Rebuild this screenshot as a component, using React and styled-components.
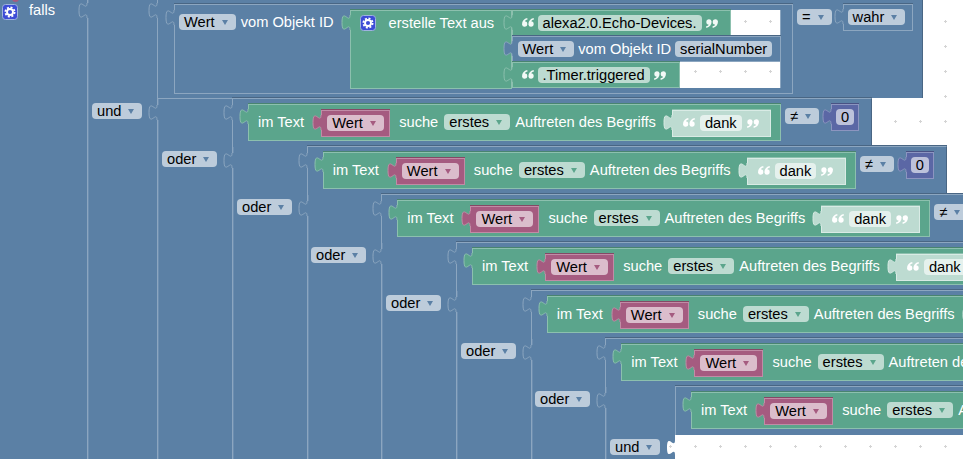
import React from "react";
import styled, { createGlobalStyle } from "styled-components";

const dots = `url("data:image/svg+xml,%3Csvg xmlns='http://www.w3.org/2000/svg' width='25' height='25'%3E%3Cpath d='M20.5 20v3M19 21.5h3' stroke='%23d4d4d4' stroke-width='1' fill='none'/%3E%3C/svg%3E")`;

const TONES = {
  logic: { fill: "#5b80a5", light: "#8ca6c0", dark: "#496684", pill: "#bdccdb", arrow: "#5b80a5" },
  text: { fill: "#5ba58c", light: "#8cc0ae", dark: "#498470", pill: "#bddbd1", arrow: "#5ba58c" },
  shadow: { fill: "#bddbd1", light: "#d9ebe5", dark: "#8cc0ae", pill: "#e5f1ed", arrow: "#5ba58c" },
  variable: { fill: "#a55b80", light: "#c08ca6", dark: "#844966", pill: "#dbbdcc", arrow: "#a55b80" },
  math: { fill: "#5b67a5", light: "#8c95c0", dark: "#495284", pill: "#bdc2db", arrow: "#5b67a5" },
};

const Global = createGlobalStyle`
  html, body { margin: 0; padding: 0; overflow: hidden; background: #fff; }
  * { box-sizing: border-box; }
`;

const Canvas = styled.main`
  position: relative;
  width: 963px;
  height: 459px;
  overflow: hidden;
  background: #fff ${dots} fixed;
  font: 14.67px/16px "Liberation Sans", Arial, sans-serif;
  color: #fff;
  white-space: nowrap;
`;

const Field = styled.div`
  position: absolute;
  left: 0;
  top: 0;
  width: 675px;
  height: 459px;
  background: ${TONES.logic.fill};
`;

const Rule = styled.i`
  position: absolute;
  left: ${(p) => p.$x}px;
  top: ${(p) => p.$y}px;
  bottom: ${(p) => p.$bottom || 0}px;
  width: 1px;
  background: ${TONES.logic.light};
  box-shadow: 1px 0 0 #6d8eb0;
`;

const Ledge = styled.i`
  position: absolute;
  left: ${(p) => p.$x}px;
  top: ${(p) => p.$y}px;
  width: ${(p) => p.$w}px;
  height: 1px;
  background: ${TONES.logic.light};
  box-shadow: 0 -1px 0 ${TONES.logic.dark};
`;

const Band = styled.section`
  position: absolute;
  left: ${(p) => p.$x}px;
  top: ${(p) => p.$y}px;
  width: ${(p) => p.$w}px;
  height: ${(p) => p.$h}px;
  display: flex;
  align-items: flex-start;
  padding: ${(p) => p.$pt}px 0 0 ${(p) => p.$pl}px;
  background: ${TONES.logic.fill};
  border-top: 1px solid ${TONES.logic.light};
  border-left: 1px solid ${TONES.logic.light};
  border-right: 1px solid ${TONES.logic.dark};
  box-shadow: 0 -1px 0 ${TONES.logic.dark};
`;

const Plate = styled.div`
  position: relative;
  flex: none;
  display: flex;
  align-items: ${(p) => p.$align || "center"};
  width: ${(p) => (p.$w ? `${p.$w}px` : "auto")};
  height: ${(p) => p.$h}px;
  padding: ${(p) => p.$pt || 0}px 0 1px ${(p) => p.$pad ?? 5}px;
  gap: ${(p) => p.$gap ?? 5}px;
  margin: ${(p) => p.$mt || 0}px 0 0 ${(p) => p.$ml || 0}px;
  background: ${(p) => TONES[p.$tone].fill};
  border: 1px solid ${(p) => TONES[p.$tone].light};
  box-shadow: 0 -1px 0 ${(p) => TONES[p.$tone].dark};
`;

const Label = styled.span`
  flex: none;
  margin: ${(p) => p.$mt || 0}px 0 0 ${(p) => p.$ml || 0}px;
  color: #fff;
`;

const PillBox = styled.span`
  flex: none;
  display: inline-flex;
  align-items: center;
  height: 16px;
  margin: ${(p) => p.$mt || 0}px 0 0 ${(p) => p.$ml || 0}px;
  padding: 0 5px;
  gap: 7px;
  border-radius: 4px;
  background: ${(p) => TONES[p.$tone].pill};
  color: #000;
`;

const Caret = styled.b`
  flex: none;
  width: 0;
  height: 0;
  margin-right: 3px;
  margin-top: 1px;
  border-left: 3.5px solid transparent;
  border-right: 3.5px solid transparent;
  border-top: 5px solid ${(p) => TONES[p.$tone].arrow};
`;

const IconSvg = styled.svg`
  flex: none;
  display: block;
  overflow: visible;
`;

const GearSvg = styled(IconSvg)`
  margin-top: ${(p) => p.$mt || 0}px;
`;

const Overlay = styled.svg`
  position: absolute;
  left: ${(p) => p.$x}px;
  top: ${(p) => p.$y}px;
  overflow: visible;
  width: 9px;
  height: 20px;
`;

const Peek = styled.i`
  position: absolute;
  left: 12px;
  top: -5px;
  width: 7px;
  height: 7px;
  border-radius: 50%;
  background: ${TONES.variable.fill};
`;

const Falls = styled.div`
  position: absolute;
  left: 2px;
  top: 2px;
  display: flex;
  align-items: flex-start;
  gap: 11px;
`;

const OpLabel = styled.div`
  position: absolute;
  left: ${(p) => p.$x}px;
  top: ${(p) => p.$y}px;
`;

const Join = styled.div`
  flex: none;
  display: flex;
  margin-left: 11px;
`;

const JoinColumn = styled.div`
  flex: none;
  width: 269px;
  display: flex;
  flex-direction: column;
`;

const Slot = styled.div`
  position: relative;
  display: flex;
  height: 26px;
`;

const Hole = styled.div`
  flex: 1;
  background: #fff ${dots} fixed;
  border-right: 1px solid ${TONES.logic.light};
`;

const TAB = "M8,5 c0,10 -8,-8 -8,7.5 s8,-2.5 8,7.5";

function Tab({ tone, x = -9, y = -1 }) {
  const t = TONES[tone];
  return (
    <Overlay $x={x} $y={y} viewBox="0 0 9 20">
      <path d={`${TAB} L9,20 L9,5 Z`} fill={t.fill} />
      <path d={TAB} fill="none" stroke={t.light} strokeWidth="1" />
    </Overlay>
  );
}

function Notch({ x, y }) {
  const t = TONES.logic;
  return (
    <Overlay $x={x} $y={y} viewBox="0 0 9 20">
      <rect x="7" y="5" width="3" height="15" fill={t.fill} />
      <path d={TAB} fill={t.fill} stroke={t.light} strokeWidth="1" />
    </Overlay>
  );
}

function Pill({ tone, children, ml, mt }) {
  return (
    <PillBox $tone={tone} $ml={ml} $mt={mt}>
      {children}
      <Caret $tone={tone} />
    </PillBox>
  );
}

function Gear({ mt }) {
  return (
    <GearSvg width="16" height="16" viewBox="0 0 16 16" $mt={mt}>
      <rect x="0.5" y="0.5" width="15" height="15" rx="3" fill="#3c4cd6" stroke="#9fb2e0" />
      <circle cx="8" cy="8" r="4.6" fill="none" stroke="#fff" strokeWidth="1.8" strokeDasharray="2 1.6" />
      <circle cx="8" cy="8" r="3" fill="none" stroke="#fff" strokeWidth="1.9" />
    </GearSvg>
  );
}

function Quote({ close, color = "#f2f9f6" }) {
  const d = "M5.2 0 C2 0.8 0 3 0 6.4 a2.7 2.7 0 1 0 2.9 -3.1 C3.2 2.6 4 2 5.6 1.6 Z";
  return (
    <IconSvg width="12" height="10" viewBox="0 0 12 10">
      <g transform={close ? "rotate(180 6 5)" : undefined} fill={color}>
        <path d={d} />
        <path d={d} transform="translate(6.4 0)" />
      </g>
    </IconSvg>
  );
}

function QuotedSlot({ text, w }) {
  return (
    <Slot>
      <Plate $tone="text" $w={w} $h={26} $pad={9} $gap={4}>
        <Tab tone="text" />
        <Quote />
        <PillBox $tone="text">{text}</PillBox>
        <Quote close />
      </Plate>
      <Hole />
    </Slot>
  );
}

function CompareRow() {
  return (
    <>
      <Plate $tone="text" $w={533} $h={37} $pad={9} $gap={0}>
        <Tab tone="text" />
        <Label>im Text</Label>
        <Plate $tone="variable" $w={69} $h={27} $pad={5} $ml={17} $mt={3}>
          <Tab tone="variable" />
          <Pill tone="variable">Wert</Pill>
        </Plate>
        <Label $ml={9}>suche</Label>
        <Pill tone="text" ml={6}>erstes</Pill>
        <Label $ml={5}>Auftreten des Begriffs</Label>
        <Plate $tone="shadow" $w={99} $h={27} $pad={10} $gap={5} $ml={16} $mt={3}>
          <Tab tone="shadow" />
          <Quote color="#fff" />
          <PillBox $tone="shadow">dank</PillBox>
          <Quote close color="#fff" />
        </Plate>
      </Plate>
      <Pill tone="logic" ml={4} mt={4}>≠</Pill>
      <Plate $tone="math" $w={28} $h={27} $pad={4} $ml={12}>
        <Tab tone="math" />
        <PillBox $tone="math">0</PillBox>
      </Plate>
    </>
  );
}

const COLUMNS = [232, 306.67, 381.33, 456, 530.67, 605.33, 675];
const ROW_TOP = 98;
const ROW_H = 48;
const OPERATORS = [
  { x: 162, y: 151 },
  { x: 237, y: 199 },
  { x: 311, y: 247 },
  { x: 386, y: 295 },
  { x: 461, y: 343 },
  { x: 535, y: 391 },
];

export default function App() {
  return (
    <Canvas>
      <Global />
      <Field>
        <Rule $x={87} $y={0} />
        <Rule $x={157} $y={0} />
        {COLUMNS.map((x, i) => (
          <Rule key={x} $x={x} $y={ROW_TOP + ROW_H * i} $bottom={i === 6 ? 25 : 0} />
        ))}
        {COLUMNS.map((x, i) => {
          const from = i === 0 ? 157 : COLUMNS[i - 1];
          return <Ledge key={x} $x={from} $y={ROW_TOP + ROW_H * i} $w={x - from} />;
        })}
      </Field>

      <Band $x={157} $y={-1} $w={766} $h={99} $pt={4} $pl={16}>
        <Plate $tone="logic" $w={619} $h={90} $pad={4} $pt={5} $gap={5} $align="flex-start">
          <Tab tone="logic" y={0} />
          <Pill tone="logic" mt={4}>Wert</Pill>
          <Label $mt={4}>vom Objekt ID</Label>
          <Join>
            <Plate $tone="text" $w={162} $h={79} $pad={9} $pt={4} $gap={13} $align="flex-start">
              <Tab tone="text" />
              <Gear />
              <Label $mt={0}>erstelle Text aus</Label>
            </Plate>
            <JoinColumn>
              <QuotedSlot text="alexa2.0.Echo-Devices." w={219} />
              <Slot>
                <Plate $tone="logic" $w={269} $h={26} $pad={5} $gap={4}>
                  <Tab tone="logic" />
                  <Pill tone="logic">Wert</Pill>
                  <Label>vom Objekt ID</Label>
                  <PillBox $tone="logic">serialNumber</PillBox>
                </Plate>
              </Slot>
              <QuotedSlot text=".Timer.triggered" w={168} />
            </JoinColumn>
          </Join>
        </Plate>
        <Pill tone="logic" ml={4} mt={5}>=</Pill>
        <Plate $tone="logic" $w={70} $h={27} $pad={4} $ml={11}>
          <Tab tone="logic" />
          <Pill tone="logic">wahr</Pill>
        </Plate>
      </Band>

      {COLUMNS.map((x, i) => (
        <Band key={x} $x={x} $y={ROW_TOP + ROW_H * i} $w={640} $h={ROW_H + 1} $pt={5} $pl={15}>
          <CompareRow />
        </Band>
      ))}

      <Falls>
        <Gear mt={2} />
        <Label>falls</Label>
      </Falls>
      <Peek />

      <OpLabel $x={92} $y={103}><Pill tone="logic">und</Pill></OpLabel>
      {OPERATORS.map((o) => (
        <OpLabel key={o.x} $x={o.x} $y={o.y}><Pill tone="logic">oder</Pill></OpLabel>
      ))}
      <OpLabel $x={610} $y={439}><Pill tone="logic">und</Pill></OpLabel>

      <Notch x={79} y={-2} />
      <Notch x={149} y={-2} />
      <Notch x={149} y={100} />
      {COLUMNS.slice(0, 6).map((x, i) => (
        <React.Fragment key={x}>
          <Notch x={x - 8} y={ROW_TOP + ROW_H * i + 2} />
          <Notch x={x - 8} y={ROW_TOP + ROW_H * (i + 1) + 2} />
        </React.Fragment>
      ))}
      <Overlay $x={667} $y={435} viewBox="0 0 9 20">
        <path d={`${TAB} L9,20 L9,5 Z`} fill="#fff" />
        <path d="M2 11.5h3M3.5 10v3" stroke="#d4d4d4" fill="none" />
      </Overlay>
    </Canvas>
  );
}
